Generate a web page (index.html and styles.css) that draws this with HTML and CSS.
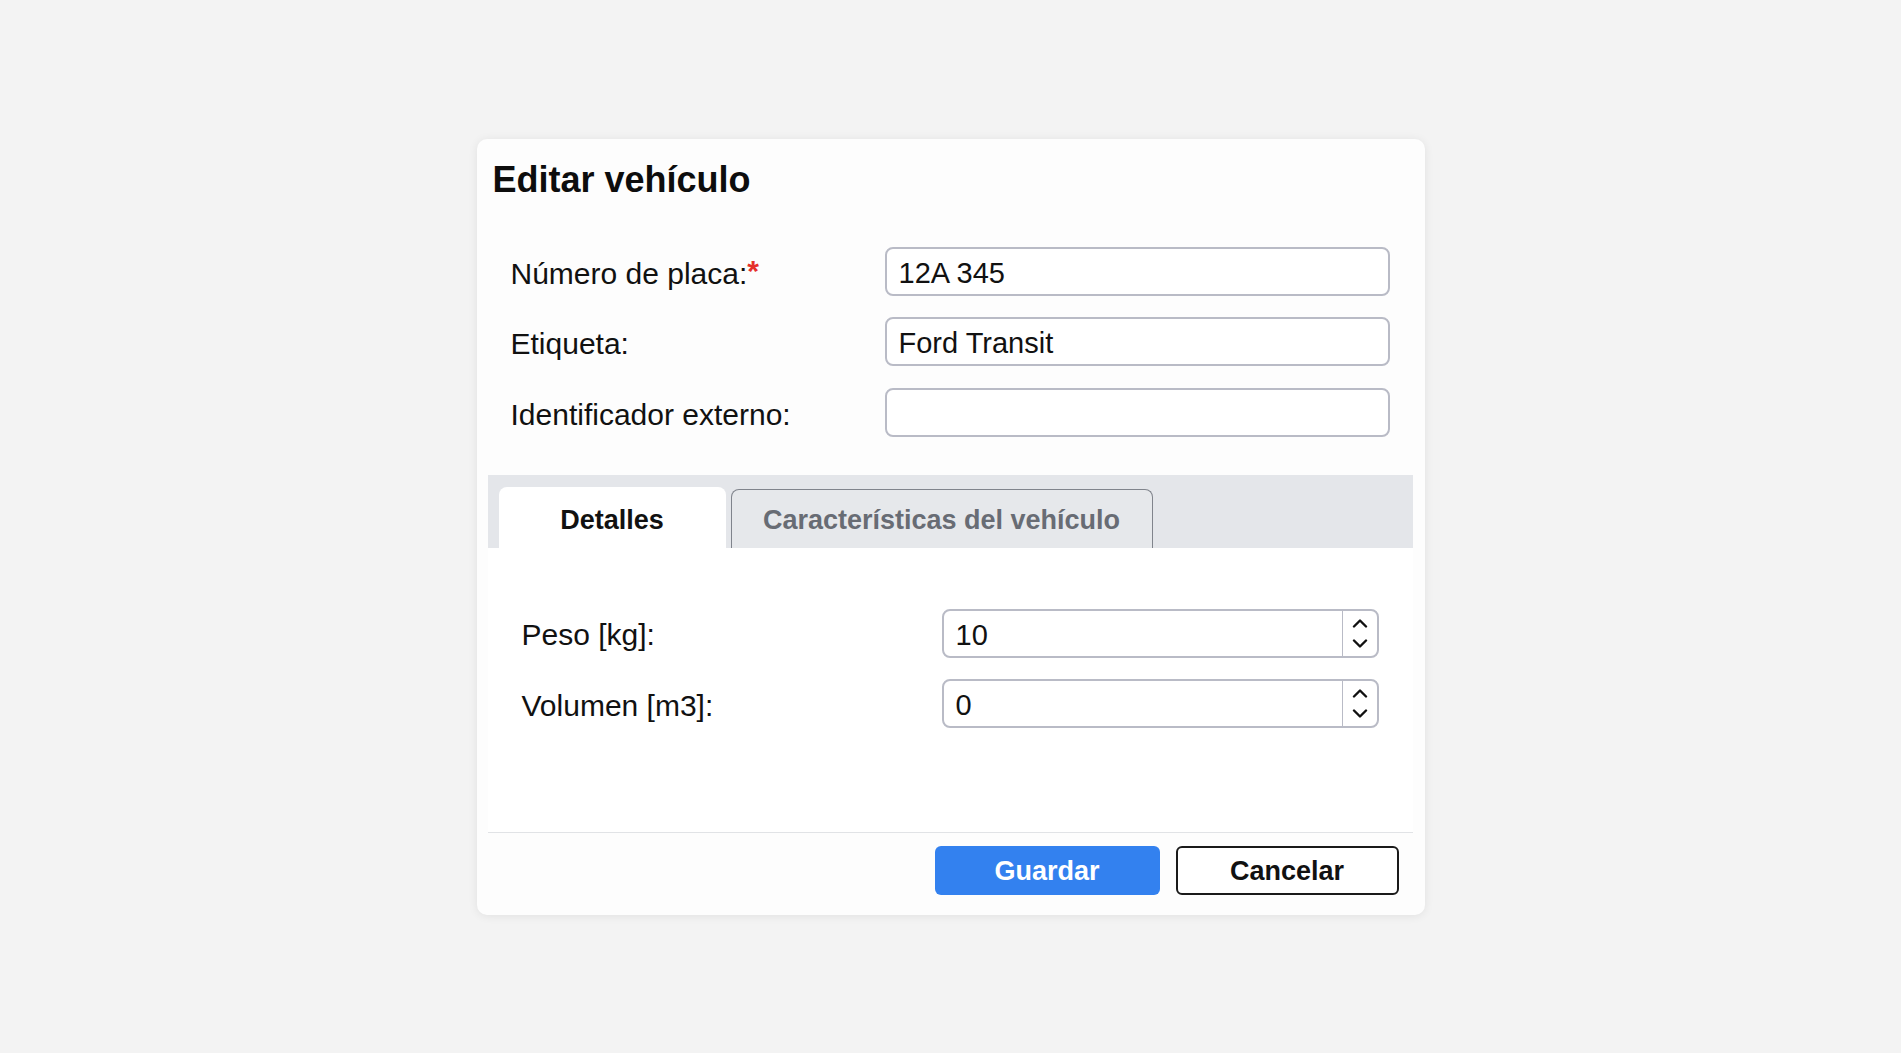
FILE: index.html
```html
<!DOCTYPE html>
<html lang="es">
<head>
<meta charset="utf-8">
<title>Editar vehículo</title>
<link rel="stylesheet" href="styles.css">
</head>
<body>
<div class="dialog">
  <h1 class="title">Editar vehículo</h1>
  <div class="form">
    <div class="row">
      <label class="label">Número de placa:<span class="req">*</span></label>
      <input class="input" type="text" value="12A 345">
    </div>
    <div class="row">
      <label class="label">Etiqueta:</label>
      <input class="input" type="text" value="Ford Transit">
    </div>
    <div class="row">
      <label class="label">Identificador externo:</label>
      <input class="input" type="text" value="">
    </div>
  </div>
  <div class="tabs">
    <div class="tab active">Detalles</div>
    <div class="tab inactive">Características del vehículo</div>
  </div>
  <div class="panel">
    <div class="prow">
      <label class="plabel">Peso [kg]:</label>
      <div class="numfield">
        <input class="numinput" type="text" value="10">
        <div class="spin">
          <svg class="chev" viewBox="0 0 18 10" width="18" height="10"><polyline points="3,8.5 9,2.5 15,8.5"/></svg>
          <svg class="chev" viewBox="0 0 18 10" width="18" height="10"><polyline points="3,1.5 9,7.5 15,1.5"/></svg>
        </div>
      </div>
    </div>
    <div class="prow">
      <label class="plabel">Volumen [m3]:</label>
      <div class="numfield">
        <input class="numinput" type="text" value="0">
        <div class="spin">
          <svg class="chev" viewBox="0 0 18 10" width="18" height="10"><polyline points="3,8.5 9,2.5 15,8.5"/></svg>
          <svg class="chev" viewBox="0 0 18 10" width="18" height="10"><polyline points="3,1.5 9,7.5 15,1.5"/></svg>
        </div>
      </div>
    </div>
  </div>
  <div class="sep"></div>
  <div class="footer">
    <button class="btn primary">Guardar</button>
    <button class="btn secondary">Cancelar</button>
  </div>
</div>
</body>
</html>
```
FILE: styles.css
```css
html, body {
  margin: 0;
  height: 100%;
}
body {
  background: #f3f3f3;
  display: flex;
  align-items: center;
  justify-content: center;
  font-family: "Liberation Sans", Arial, Helvetica, sans-serif;
  color: #111;
}
.dialog {
  width: 948px;
  height: 776px;
  box-sizing: border-box;
  background: #fdfdfd;
  border-radius: 10px;
  box-shadow: 0 1px 10px rgba(0, 0, 0, 0.08);
  padding: 20px 12px 20px 11px;
  display: flex;
  flex-direction: column;
}
.title {
  margin: 0 0 0 5px;
  font-size: 36px;
  line-height: 41px;
  font-weight: 700;
  color: #0d0d0d;
}
.form {
  margin-top: 47px;
  padding: 0 23px;
  display: flex;
  flex-direction: column;
  gap: 21.5px;
}
.row {
  display: flex;
  align-items: center;
}
.label {
  width: 374px;
  font-size: 30px;
  line-height: 34px;
  padding-top: 5px;
  color: #111;
}
.req {
  color: #e5302b;
  font-weight: 700;
  position: relative;
  top: -3px;
}
.input {
  width: 505px;
  height: 49px;
  box-sizing: border-box;
  border: 2px solid #b9bbc6;
  border-radius: 8px;
  padding: 4px 12px 0;
  font-family: "Liberation Sans", Arial, sans-serif;
  font-size: 29px;
  color: #111;
  background: #fff;
  outline: none;
}
.tabs {
  margin-top: 38px;
  height: 73px;
  background: #e4e6ea;
  display: flex;
  align-items: flex-end;
  padding-left: 11px;
  gap: 5px;
}
.tab {
  box-sizing: border-box;
  display: flex;
  align-items: center;
  justify-content: center;
  font-size: 27px;
  font-weight: 700;
  border-radius: 8px 8px 0 0;
}
.tab.active {
  width: 227px;
  height: 61px;
  background: #fff;
  color: #111;
  padding-top: 6px;
}
.tab.inactive {
  width: 422px;
  height: 59px;
  border: 1.5px solid #80848c;
  border-bottom: none;
  background: #e6e8eb;
  color: #686c74;
  padding-top: 4px;
}
.panel {
  flex: 1;
  background: #fff;
  padding: 61px 34px 0;
  display: flex;
  flex-direction: column;
  gap: 21.5px;
}
.prow {
  display: flex;
  align-items: center;
}
.plabel {
  width: 420px;
  font-size: 30px;
  line-height: 34px;
  padding-top: 4px;
  color: #111;
}
.numfield {
  width: 437px;
  height: 49px;
  box-sizing: border-box;
  border: 2px solid #b9bbc6;
  border-radius: 8px;
  background: #fff;
  display: flex;
  overflow: hidden;
}
.numinput {
  flex: 1;
  min-width: 0;
  border: none;
  background: transparent;
  padding: 4px 12px 0;
  font-family: "Liberation Sans", Arial, sans-serif;
  font-size: 29px;
  color: #111;
  outline: none;
}
.spin {
  width: 34px;
  border-left: 1.5px solid #b9bbc6;
  display: flex;
  flex-direction: column;
  align-items: center;
  justify-content: center;
  gap: 11px;
}
.chev {
  display: block;
  fill: none;
  stroke: #111;
  stroke-width: 2.4;
  stroke-linecap: round;
  stroke-linejoin: round;
}
.sep {
  height: 1px;
  background: #e1e3e6;
}
.footer {
  margin-top: 13px;
  display: flex;
  justify-content: flex-end;
  gap: 16px;
  padding-right: 14px;
}
.btn {
  height: 49px;
  box-sizing: border-box;
  border-radius: 6px;
  padding-top: 4px;
  font-family: "Liberation Sans", Arial, sans-serif;
  font-size: 27px;
  font-weight: 700;
  cursor: pointer;
}
.btn.primary {
  width: 225px;
  background: #3381ef;
  border: none;
  color: #fff;
}
.btn.secondary {
  width: 223px;
  background: #fff;
  border: 2px solid #1a1a1a;
  color: #111;
}
```
